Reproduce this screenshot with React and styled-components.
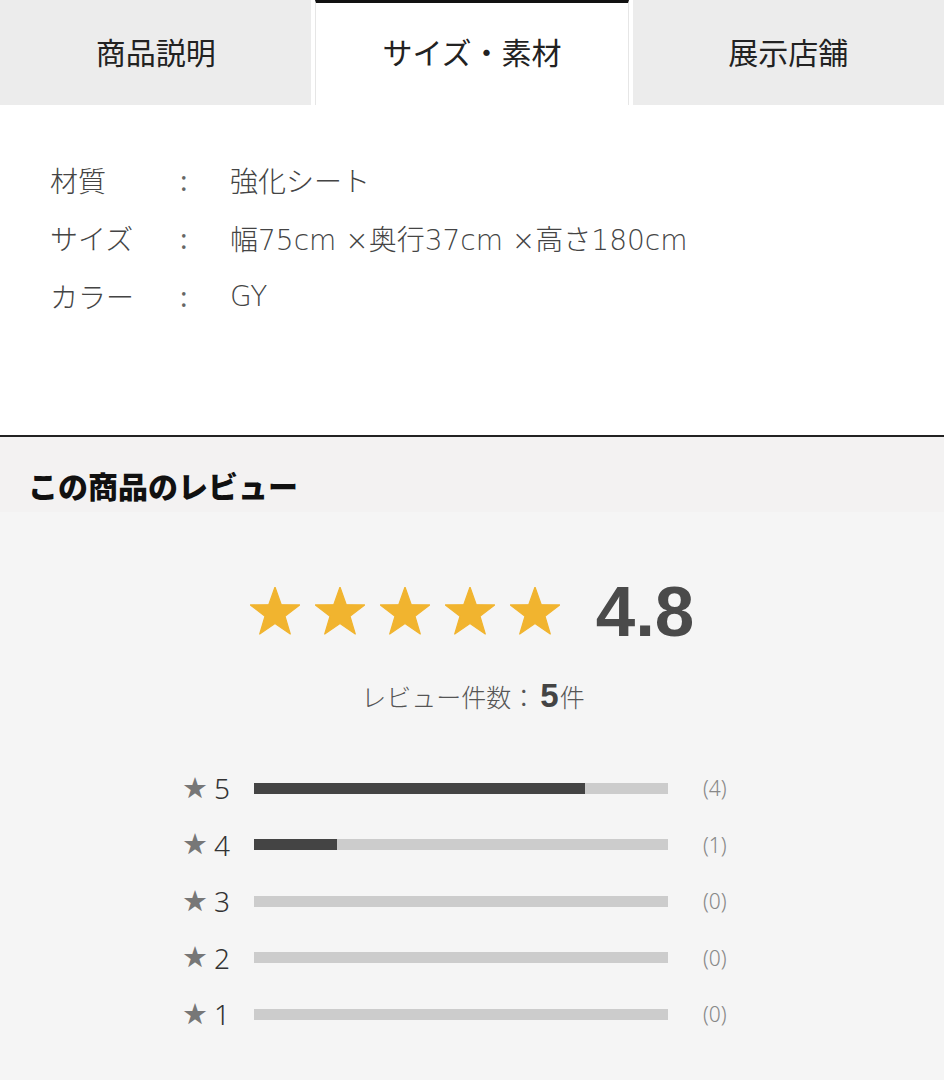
import React, { useState } from 'react';
import styled, { createGlobalStyle } from 'styled-components';

const GlobalStyle = createGlobalStyle`
  html, body {
    margin: 0;
    padding: 0;
    background: #ffffff;
  }
  body {
    font-family: "Noto Sans", "Noto Sans CJK JP", sans-serif;
  }
`;

const Page = styled.div`
  display: flex;
  flex-direction: column;
  min-height: 100vh;
`;

const Tabs = styled.div`
  display: flex;
  gap: 4px;
  height: 105px;
`;

const Tab = styled.div`
  flex: 1;
  display: flex;
  align-items: center;
  justify-content: center;
  box-sizing: border-box;
  padding-bottom: 6px;
  font-family: "Noto Sans CJK JP", sans-serif;
  font-size: 30px;
  font-weight: 400;
  color: #222;
  cursor: pointer;
  background-color: ${(props) => (props.active ? '#ffffff' : '#ececec')};
  border-top: ${(props) => (props.active ? '3px solid #111' : '3px solid #ececec')};
  border-left: ${(props) => (props.active ? '1px solid #e6e6e6' : 'none')};
  border-right: ${(props) => (props.active ? '1px solid #e6e6e6' : 'none')};
`;

const Specs = styled.div`
  padding: 46px 0 110px 50px;
  color: #444;
  font-family: "DejaVu Sans", "Noto Sans CJK JP", sans-serif;
  font-size: 28px;
  font-weight: 300;
`;

const SpecRow = styled.div`
  display: grid;
  grid-template-columns: 130px 50px 1fr;
  height: 58px;
  align-items: center;
`;

const Colon = styled.span`
  font-family: "Noto Sans", sans-serif;
  font-weight: 400;
  color: #666;
`;

const Review = styled.section`
  flex: 1;
  background: #f5f5f5;
  border-top: 2px solid #222;
`;

const ReviewHeader = styled.h2`
  margin: 0;
  padding: 30px 28px 9px;
  background: #f3f2f2;
  font-family: "Noto Sans CJK JP", sans-serif;
  font-size: 30px;
  font-weight: 900;
  line-height: 36px;
  color: #111;
`;

const ReviewBody = styled.div`
  padding: 64px 0 40px;
`;

const Summary = styled.div`
  display: flex;
  justify-content: center;
  align-items: center;
  height: 70px;
`;

const StarRow = styled.div`
  display: flex;
  gap: 15px;
  margin-right: 36px;
`;

const Score = styled.span`
  font-family: "Liberation Sans", Arial, sans-serif;
  font-weight: 700;
  font-size: 71px;
  line-height: 1;
  color: #4a4a4a;
`;

const CountLine = styled.div`
  margin-top: 31px;
  height: 40px;
  display: flex;
  justify-content: center;
  align-items: baseline;
  font-family: "Noto Sans CJK JP", sans-serif;
  font-size: 25px;
  font-weight: 300;
  color: #555;
  padding-left: 2px;
`;

const CountNum = styled.b`
  font-family: "Liberation Sans", Arial, sans-serif;
  font-size: 33px;
  font-weight: 700;
  color: #444;
  margin: 0 1px 0 4px;
`;

const Distribution = styled.div`
  margin: 43px auto 0;
  width: 576px;
`;

const DistRow = styled.div`
  display: grid;
  grid-template-columns: 70px 414px 92px;
  align-items: center;
  height: 56.5px;
`;

const StarLabel = styled.div`
  display: flex;
  align-items: center;
  gap: 6px;
  font-size: 28px;
  font-weight: 300;
  color: #333;
  margin-left: -2px;
`;

const SmallStar = styled.span`
  color: #777;
  font-family: "DejaVu Sans", sans-serif;
  font-size: 29px;
  line-height: 1;
`;

const Bar = styled.div`
  height: 11px;
  background: #cccccc;
`;

const BarFill = styled.div`
  height: 100%;
  background: #444;
`;

const Count = styled.span`
  padding-left: 35px;
  font-size: 21px;
  font-weight: 300;
  color: #888;
`;

const Star = () => (
  <svg width="50" height="48" viewBox="0 0 50 48">
    <polygon
      points="25,0 31.17,17.51 49.73,17.97 34.99,29.24 40.28,47.03 25,36.5 9.72,47.03 15.01,29.24 0.27,17.97 18.83,17.51"
      fill="#f1b42f"
      stroke="#f1b42f"
      strokeWidth="1.2"
      strokeLinejoin="round"
    />
  </svg>
);

const tabs = ['商品説明', 'サイズ・素材', '展示店舗'];

const specs = [
  { label: '材質', value: '強化シート' },
  { label: 'サイズ', value: '幅75cm ×奥行37cm ×高さ180cm' },
  { label: 'カラー', value: 'GY' },
];

const ratings = [
  { stars: 5, count: 4 },
  { stars: 4, count: 1 },
  { stars: 3, count: 0 },
  { stars: 2, count: 0 },
  { stars: 1, count: 0 },
];

const App = () => {
  const [activeTab, setActiveTab] = useState(1);
  const total = ratings.reduce((sum, r) => sum + r.count, 0);

  return (
    <Page>
      <GlobalStyle />
      <Tabs>
        {tabs.map((t, i) => (
          <Tab key={t} active={i === activeTab} onClick={() => setActiveTab(i)}>
            {t}
          </Tab>
        ))}
      </Tabs>

      <Specs>
        {specs.map((s) => (
          <SpecRow key={s.label}>
            <span>{s.label}</span>
            <Colon>:</Colon>
            <span>{s.value}</span>
          </SpecRow>
        ))}
      </Specs>

      <Review>
        <ReviewHeader>この商品のレビュー</ReviewHeader>
        <ReviewBody>
          <Summary>
            <StarRow>
              {[0, 1, 2, 3, 4].map((i) => (
                <Star key={i} />
              ))}
            </StarRow>
            <Score>4.8</Score>
          </Summary>
          <CountLine>
            レビュー件数：<CountNum>{total}</CountNum>件
          </CountLine>
          <Distribution>
            {ratings.map((r) => (
              <DistRow key={r.stars}>
                <StarLabel>
                  <SmallStar>★</SmallStar>
                  {r.stars}
                </StarLabel>
                <Bar>
                  <BarFill style={{ width: `${(r.count / total) * 100}%` }} />
                </Bar>
                <Count>({r.count})</Count>
              </DistRow>
            ))}
          </Distribution>
        </ReviewBody>
      </Review>
    </Page>
  );
};

export default App;
